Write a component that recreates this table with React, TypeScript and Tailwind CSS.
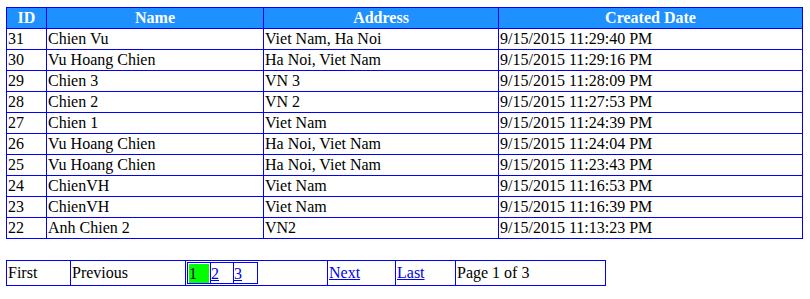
const rows = [
  { id: 31, name: 'Chien Vu', address: 'Viet Nam, Ha Noi', date: '9/15/2015 11:29:40 PM' },
  { id: 30, name: 'Vu Hoang Chien', address: 'Ha Noi, Viet Nam', date: '9/15/2015 11:29:16 PM' },
  { id: 29, name: 'Chien 3', address: 'VN 3', date: '9/15/2015 11:28:09 PM' },
  { id: 28, name: 'Chien 2', address: 'VN 2', date: '9/15/2015 11:27:53 PM' },
  { id: 27, name: 'Chien 1', address: 'Viet Nam', date: '9/15/2015 11:24:39 PM' },
  { id: 26, name: 'Vu Hoang Chien', address: 'Ha Noi, Viet Nam', date: '9/15/2015 11:24:04 PM' },
  { id: 25, name: 'Vu Hoang Chien', address: 'Ha Noi, Viet Nam', date: '9/15/2015 11:23:43 PM' },
  { id: 24, name: 'ChienVH', address: 'Viet Nam', date: '9/15/2015 11:16:53 PM' },
  { id: 23, name: 'ChienVH', address: 'Viet Nam', date: '9/15/2015 11:16:39 PM' },
  { id: 22, name: 'Anh Chien 2', address: 'VN2', date: '9/15/2015 11:13:23 PM' },
];

const cell = 'border border-[#0000ff] px-px py-0 h-[21px] leading-[18px] align-middle';
const head = 'border border-[#0000ff] px-px py-0 h-[21px] leading-[18px] font-bold text-white text-center';
const link = 'text-[#0000ee] underline';

export default function App() {
  return (
    <div className="bg-white w-[810px] h-[299px] pl-[6px] pt-[7px] text-[16px] text-black font-['Liberation_Serif',serif]">
      {/* grid */}
      <table className="border-collapse border border-[#0000ff] w-[796px] table-fixed">
        <colgroup>
          <col className="w-[40px]" />
          <col className="w-[217px]" />
          <col className="w-[235px]" />
          <col className="w-[304px]" />
        </colgroup>
        <thead>
          <tr className="bg-[#1e90ff]">
            <th className={head}>ID</th>
            <th className={head}>Name</th>
            <th className={head}>Address</th>
            <th className={head}>Created Date</th>
          </tr>
        </thead>
        <tbody>
          {rows.map(r => (
            <tr key={r.id}>
              <td className={cell}>{r.id}</td>
              <td className={cell}>{r.name}</td>
              <td className={cell}>{r.address}</td>
              <td className={cell}>{r.date}</td>
            </tr>
          ))}
        </tbody>
      </table>

      {/* pager */}
      <table className="mt-[21px] border-collapse border border-[#0000ff] w-[599px] table-fixed">
        <colgroup>
          <col className="w-[64px]" />
          <col className="w-[115px]" />
          <col className="w-[142px]" />
          <col className="w-[68px]" />
          <col className="w-[60px]" />
          <col className="w-[150px]" />
        </colgroup>
        <tbody>
          <tr>
            <td className="border border-[#0000ff] px-px py-0 h-[25px]">First</td>
            <td className="border border-[#0000ff] px-px py-0 h-[25px]">Previous</td>
            <td className="border border-[#0000ff] p-px h-[25px]">
              <table className="border-collapse border border-[#0000ff]">
                <tbody>
                  <tr>
                    <td className="border border-[#0000ff] w-[23px] h-[21px] pl-px pt-px p-0 align-top">
                      <div className="w-[20px] h-[19px] bg-[#00ff00] leading-[19px]">1</div>
                    </td>
                    <td className="border border-[#0000ff] w-[23px] h-[21px] p-0 leading-[19px]">
                      <a href="#" className={link}>2</a>
                    </td>
                    <td className="border border-[#0000ff] w-[24px] h-[21px] p-0 leading-[19px]">
                      <a href="#" className={link}>3</a>
                    </td>
                  </tr>
                </tbody>
              </table>
            </td>
            <td className="border border-[#0000ff] px-px py-0 h-[25px]">
              <a href="#" className={link}>Next</a>
            </td>
            <td className="border border-[#0000ff] px-px py-0 h-[25px]">
              <a href="#" className={link}>Last</a>
            </td>
            <td className="border border-[#0000ff] px-px py-0 h-[25px]">Page 1 of 3</td>
          </tr>
        </tbody>
      </table>
    </div>
  );
}
